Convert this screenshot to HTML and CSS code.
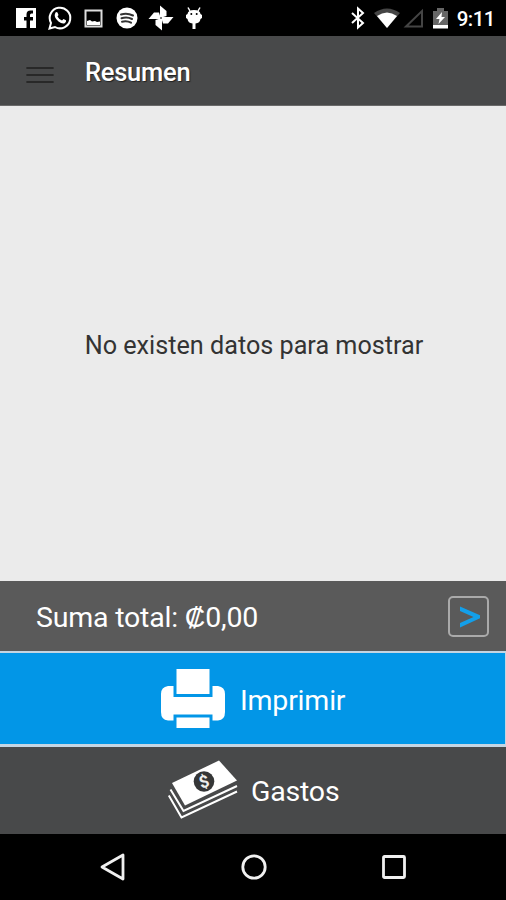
FILE: index.html
```html
<!DOCTYPE html>
<html lang="es">
<head>
<meta charset="utf-8">
<title>Resumen</title>
<link rel="stylesheet" href="styles.css">
</head>
<body>
<div class="app">
  <div class="status">
    <div class="notifications">
      <svg width="20" height="20" viewBox="0 0 20 20"><path fill="#fff" d="M0 0H20V20H14V12.5H17V9H14V7Q14 5.500 15.500 5.500H17V2.500H14.500Q10.500 2.500 10.500 6.500V9H8V12.500H10.500V20H0Z"/></svg>
      <svg width="24" height="24" viewBox="0 0 24 24"><path fill="none" stroke="#fff" stroke-width="2" d="M1.500 22.500L3 17A10.300 10.300 0 1 1 7 21Z"/><path fill="#fff" d="M7.500 6.500Q8.500 5.500 9.500 6.500L10.500 9L9.500 10.500Q11 13.500 14 14.500L15.500 13L18 14.300Q18.500 15.500 17 17Q14.500 18.500 10.500 15.500Q5 11 7.500 6.500Z"/></svg>
      <svg width="19" height="19" viewBox="0 0 19 19"><path fill="none" stroke="#ddd" stroke-width="2" d="M1.500 1.500H17.500V17.500H1.500Z"/><path fill="#fff" d="M3 16V12L6 11L8 12.500L11 12L13 13L16 12.500V16Z"/></svg>
      <svg class="music" width="22" height="22" viewBox="0 0 22 22"><circle cx="11" cy="11" r="10.500" fill="#fff"/><path fill="none" stroke="#333" stroke-width="2" stroke-linecap="round" d="M5 7.500Q11 5.500 17 8.500M5.500 11.300Q11 9.500 16 12M6 14.700Q11 13.500 15 15.700"/></svg>
      <svg class="photos" width="26" height="26" viewBox="-13 -13 26 26"><g fill="#fff"><path d="M-1 0L-1-12.500L5.500-7V-2Z"/><path transform="rotate(90)" d="M-1 0L-1-12.500L5.500-7V-2Z"/><path transform="rotate(180)" d="M-1 0L-1-12.500L5.500-7V-2Z"/><path transform="rotate(270)" d="M-1 0L-1-12.500L5.500-7V-2Z"/></g><circle r="1" fill="#555"/></svg>
      <svg class="droid" width="18" height="24" viewBox="0 0 18 24"><path fill="none" stroke="#fff" stroke-width="1.500" d="M3 1.500L5 5M15 1.500L13 5"/><path fill="#fff" d="M2.500 8Q3 4 9 4T15.500 8L17 9V12L15.500 13Q15 17 10.500 17.500V23H7.500V17.500Q3 17 2.500 13L1 12V9Z"/><circle cx="6.300" cy="8" r="1"/><circle cx="11.700" cy="8" r="1"/></svg>
    </div>
    <div class="system">
      <svg width="14" height="22" viewBox="0 0 14 22"><path fill="none" stroke="#fff" stroke-width="2" d="M1 6L12 16L7 20.500V1.500L12 6L1 16"/></svg>
      <svg width="26" height="21" viewBox="0 0 26 21"><path fill="#454545" d="M13 20L0 5Q13-4 26 5Z"/><path fill="#fff" d="M13 20L3 8Q13 1 23 8Z"/></svg>
      <svg width="21" height="21" viewBox="0 0 21 21"><path fill="none" stroke="#444" stroke-width="2" d="M3 18.500L19 3V18.500Z"/></svg>
      <svg width="15" height="21" viewBox="0 0 15 21"><path fill="#666" d="M0 3H4V0H11V3H15V18H0Z"/><path fill="#fff" d="M0 17H15V20.500H0ZM9 4L3 11H6.500L5.500 16L12 9H8.500Z"/></svg>
      <span class="clock">9:11</span>
    </div>
  </div>
  <header class="bar">
    <svg class="menu" width="28" height="18" viewBox="0 0 28 18"><path stroke="#282828" stroke-width="2.200" stroke-linecap="round" d="M1.200 2H26.800M1.200 9H26.800M1.200 16H26.800"/></svg>
    <h1>Resumen</h1>
  </header>
  <main class="empty"><p>No existen datos para mostrar</p></main>
  <section class="total">
    <span class="sum">Suma total: ₡0,00</span>
    <span class="go"><svg width="22" height="24" viewBox="0 0 22 24"><path fill="#139fe9" d="M1 1.500L21 10.200V13.300L1 22.500V18L14.500 11.900L1 6Z"/></svg></span>
  </section>
  <section class="print">
    <svg width="64" height="60" viewBox="0 0 64 60"><path fill="#fff" d="M15.500 0H48.500V25H15.500ZM15.500 48.500H48.500V59H15.500ZM7 17H12.500V28H51.500V17H57Q64 18 64 25V43Q64 51 57 51.500H51.500V45.500H12.500V51.500H7Q0 51 0 43V25Q0 18 7 17Z"/></svg>
    <span>Imprimir</span>
  </section>
  <section class="spend">
    <svg width="70" height="60" viewBox="0 0 70 60"><path fill="#fff" d="M4 23L51 0.500L69 20.500L17 45.500Z"/><path fill="none" stroke="#fff" stroke-width="2" d="M2.500 29.500L15.500 51L69 26M0.800 35.500L13.500 57.500L69 31.500"/><circle cx="36" cy="21.500" r="10.300" fill="#353637"/><text class="dollar" x="36" y="27.500" text-anchor="middle" transform="rotate(-18 36 21.500)">$</text></svg>
    <span>Gastos</span>
  </section>
  <nav class="nav">
    <svg width="26" height="30" viewBox="0 0 26 30"><path d="M2 15L23 3V27Z"/></svg>
    <svg width="28" height="28" viewBox="0 0 28 28"><circle cx="14" cy="14" r="11.200"/></svg>
    <svg width="26" height="26" viewBox="0 0 26 26"><rect x="2.500" y="2.500" width="21" height="21" rx="1"/></svg>
  </nav>
</div>
</body>
</html>
```
FILE: styles.css
```css
* { box-sizing: border-box; }
body { margin: 0; background: #000; font-family: Roboto, "Liberation Sans", sans-serif; color: #fff; }
svg { display: block; flex: none; overflow: visible; }
.app { width: 506px; height: 900px; display: flex; flex-direction: column; overflow: hidden; }
.status { height: 36px; flex: none; display: flex; justify-content: space-between; padding: 0 11px 0 16px; background: #000; }
.notifications, .system { display: flex; align-items: center; }
.notifications { gap: 12px; }
.music { margin-left: 1px; }
.photos { margin-left: -2px; }
.droid { margin-left: -1px; }
.system { gap: 9px; }
.system svg:nth-child(3) { margin-left: -6px; }
.clock { font-size: 20.5px; font-weight: 500; line-height: 36px; margin-top: 2px; white-space: nowrap; letter-spacing: -0.5px; }
.bar { height: 70px; flex: none; display: flex; align-items: center; padding: 0 26px; background: #48494a; border-bottom: 1px solid #6a6a6a; }
.menu { margin-top: 8px; }
h1 { margin: 2px 0 0 31px; font-size: 25.5px; font-weight: 500; line-height: 30px; letter-spacing: -0.25px; white-space: nowrap; text-shadow: 1px 1px 1px #222; }
.empty { height: 475px; flex: none; display: flex; align-items: center; justify-content: center; background: #ebebeb; color: #333; }
p { margin: 4px 0 0 2px; font-size: 25.2px; line-height: 30px; white-space: nowrap; }
.total { height: 70px; flex: none; display: flex; align-items: center; justify-content: space-between; padding: 1px 17px 0 36px; background: #5a5a5a; }
.sum, .print span, .spend span { font-size: 28.500px; line-height: 34px; letter-spacing: -0.2px; white-space: nowrap; }
.sum { margin-top: 2px; }
.go { width: 41px; height: 41px; display: flex; align-items: center; justify-content: center; border: 2px solid #aaa; border-radius: 5px; padding-left: 3px; }
.print { height: 96px; flex: none; display: flex; align-items: center; padding-left: 161px; gap: 15px; background: #0296e7; border: solid #c5d5e3; border-width: 2px 1px 3px 0; }
.print span { margin-top: 5px; }
.spend { height: 87px; flex: none; display: flex; align-items: center; padding: 0 0 2px 168px; gap: 13px; background: #48494a; }
.spend span { margin-top: 5px; }
.dollar { font-size: 17px; font-weight: 700; fill: #eee; }
.nav { height: 66px; flex: none; display: flex; align-items: center; justify-content: space-between; padding: 0 99px 0 100px; background: #000; }
.nav svg { fill: none; stroke: #f0f0f0; stroke-width: 2.800; stroke-linejoin: round; }
```
